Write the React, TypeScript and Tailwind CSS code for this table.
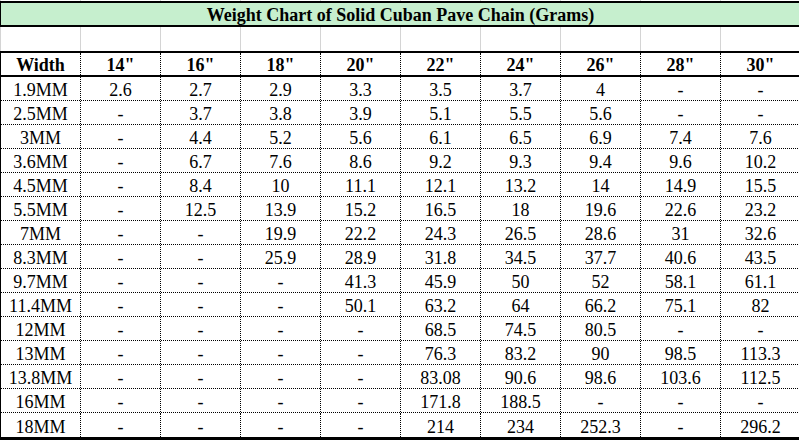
import React from "react";

const headers = ["Width", '14"', '16"', '18"', '20"', '22"', '24"', '26"', '28"', '30"'];

const rows: string[][] = [
  ["1.9MM", "2.6", "2.7", "2.9", "3.3", "3.5", "3.7", "4", "-", "-"],
  ["2.5MM", "-", "3.7", "3.8", "3.9", "5.1", "5.5", "5.6", "-", "-"],
  ["3MM", "-", "4.4", "5.2", "5.6", "6.1", "6.5", "6.9", "7.4", "7.6"],
  ["3.6MM", "-", "6.7", "7.6", "8.6", "9.2", "9.3", "9.4", "9.6", "10.2"],
  ["4.5MM", "-", "8.4", "10", "11.1", "12.1", "13.2", "14", "14.9", "15.5"],
  ["5.5MM", "-", "12.5", "13.9", "15.2", "16.5", "18", "19.6", "22.6", "23.2"],
  ["7MM", "-", "-", "19.9", "22.2", "24.3", "26.5", "28.6", "31", "32.6"],
  ["8.3MM", "-", "-", "25.9", "28.9", "31.8", "34.5", "37.7", "40.6", "43.5"],
  ["9.7MM", "-", "-", "-", "41.3", "45.9", "50", "52", "58.1", "61.1"],
  ["11.4MM", "-", "-", "-", "50.1", "63.2", "64", "66.2", "75.1", "82"],
  ["12MM", "-", "-", "-", "-", "68.5", "74.5", "80.5", "-", "-"],
  ["13MM", "-", "-", "-", "-", "76.3", "83.2", "90", "98.5", "113.3"],
  ["13.8MM", "-", "-", "-", "-", "83.08", "90.6", "98.6", "103.6", "112.5"],
  ["16MM", "-", "-", "-", "-", "171.8", "188.5", "-", "-", "-"],
  ["18MM", "-", "-", "-", "-", "214", "234", "252.3", "-", "296.2"],
];

const cols = [0, 1, 2, 3, 4, 5, 6, 7, 8, 9];

function GridRow({ h }: { h: string }) {
  return (
    <div className={`flex ${h}`}>
      {cols.map((c) => (
        <div key={c} className="w-[80px] shrink-0 h-full border-l border-[#d4d4d4]" />
      ))}
    </div>
  );
}

export default function App() {
  return (
    <div
      className="w-[799px] h-[440px] overflow-hidden bg-white text-black"
      style={{ fontFamily: '"Liberation Serif", "Times New Roman", serif' }}
    >
      <div className="w-[800px]">
        <GridRow h="h-[1px]" />
        <div className="h-[26px] border-t-2 border-b-2 border-l border-black bg-[#c6efce] flex items-end justify-center">
          <span className="text-[18px] leading-[19px] font-bold">
            Weight Chart of Solid Cuban Pave Chain (Grams)
          </span>
        </div>
        <GridRow h="h-[24px]" />
        <div className="flex h-[26px] border-t-2 border-b-2 border-black">
          {headers.map((t, i) => (
            <div
              key={i}
              className={`w-[80px] shrink-0 flex items-end justify-center text-[18px] leading-[19px] font-bold border-l ${
                i === 0 ? "border-solid border-black" : "border-dotted border-black"
              }`}
            >
              {t}
            </div>
          ))}
        </div>
        {rows.map((r, ri) => (
          <div
            key={ri}
            className={`flex ${
              ri === rows.length - 1
                ? "h-[27px] border-b-[3px] border-solid border-black"
                : "h-[24px] border-b border-dotted border-black"
            }`}
          >
            {r.map((t, i) => (
              <div
                key={i}
                className={`w-[80px] shrink-0 flex items-end justify-center text-[18px] leading-[19px] border-l ${
                  i === 0 ? "border-solid border-black" : "border-dotted border-black"
                }`}
              >
                {t}
              </div>
            ))}
          </div>
        ))}
      </div>
    </div>
  );
}
